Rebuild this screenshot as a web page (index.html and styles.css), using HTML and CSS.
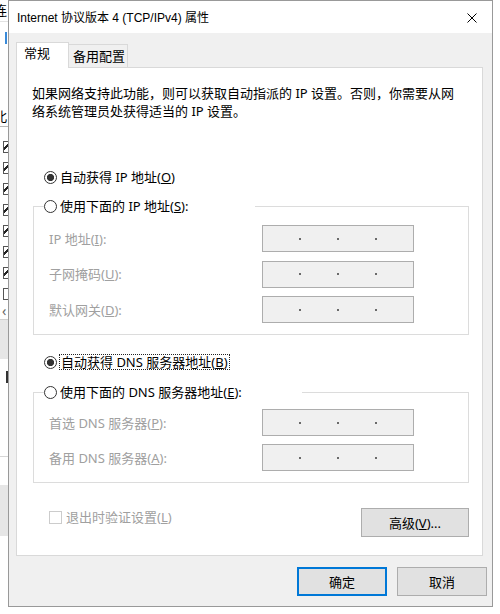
FILE: index.html
```html
<!DOCTYPE html>
<html lang="zh-CN">
<head>
<meta charset="utf-8">
<title>Internet 协议版本 4 (TCP/IPv4) 属性</title>
<link rel="stylesheet" href="styles.css">
</head>
<body>
<div class="desk">
  <div class="behind">
    <div class="bw-char bw-top"><span>连</span></div>
    <div class="bw-gap g10"></div>
    <div class="bw-blue"></div>
    <div class="bw-gap g62"></div>
    <div class="bw-char bw-bei"><span>北</span></div>
    <div class="bw-gap g9"></div>
    <div class="bw-chk on"></div>
    <div class="bw-chk on"></div>
    <div class="bw-chk on"></div>
    <div class="bw-chk on"></div>
    <div class="bw-chk on"></div>
    <div class="bw-chk on"></div>
    <div class="bw-chk on"></div>
    <div class="bw-chk"></div>
    <div class="bw-arrow">&lsaquo;</div>
    <div class="bw-gray g39"></div>
    <div class="bw-gap g12"></div>
    <div class="bw-mark"></div>
    <div class="bw-gap bw-line g74"></div>
    <div class="bw-gap g28"></div>
    <div class="bw-gray g51"></div>
    <div class="bw-rest"></div>
  </div>

  <div class="dialog">
    <div class="titlebar">
      <span class="title">Internet 协议版本 4 (TCP/IPv4) 属性</span>
      <svg class="close" width="10" height="10" viewBox="0 0 10 10"><path d="M0.5 0.5 L9.5 9.5 M9.5 0.5 L0.5 9.5" stroke="#000" stroke-width="1" fill="none"/></svg>
    </div>
    <div class="body">
      <div class="tabs">
        <div class="tab active">常规</div>
        <div class="tab other">备用配置</div>
      </div>
      <div class="panel">
        <p class="intro">如果网络支持此功能，则可以获取自动指派的 IP 设置。否则，你需要从网<br>络系统管理员处获得适当的 IP 设置。</p>

        <div class="radio-row r1"><span class="radio checked"></span><span class="rlabel">自动获得 IP 地址(<u>O</u>)</span></div>

        <fieldset class="group g-ip">
          <legend class="radio-row lg-ip"><span class="radio"></span><span class="rlabel">使用下面的 IP 地址(<u>S</u>):</span></legend>
          <div class="fields f-ip">
            <div class="field"><span class="flabel">IP 地址(<u>I</u>):</span><span class="ipbox"><i></i><i></i><i></i></span></div>
            <div class="field"><span class="flabel">子网掩码(<u>U</u>):</span><span class="ipbox"><i></i><i></i><i></i></span></div>
            <div class="field"><span class="flabel">默认网关(<u>D</u>):</span><span class="ipbox"><i></i><i></i><i></i></span></div>
          </div>
        </fieldset>

        <div class="radio-row r3"><span class="radio checked tight"></span><span class="rlabel focus">自动获得 DNS 服务器地址(<u>B</u>)</span></div>

        <fieldset class="group g-dns">
          <legend class="radio-row lg-dns"><span class="radio"></span><span class="rlabel">使用下面的 DNS 服务器地址(<u>E</u>):</span></legend>
          <div class="fields f-dns">
            <div class="field"><span class="flabel">首选 DNS 服务器(<u>P</u>):</span><span class="ipbox"><i></i><i></i><i></i></span></div>
            <div class="field"><span class="flabel">备用 DNS 服务器(<u>A</u>):</span><span class="ipbox"><i></i><i></i><i></i></span></div>
          </div>
        </fieldset>

        <div class="bottomrow">
          <div class="chk"><span class="box"></span><span class="clabel">退出时验证设置(<u>L</u>)</span></div>
          <div class="btn adv">高级(<u>V</u>)...</div>
        </div>
      </div>
      <div class="actions">
        <div class="btn ok">确定</div>
        <div class="btn cancel">取消</div>
      </div>
    </div>
  </div>
</div>
</body>
</html>
```
FILE: styles.css
```css
* { box-sizing: border-box; }
html, body { margin: 0; padding: 0; background: #fff; }
body {
  font-family: "Noto Sans", "Noto Sans CJK SC", sans-serif;
  font-size: 13px;
  color: #000;
}
u { text-decoration: underline; text-underline-offset: 1px; }

.desk { display: flex; width: 500px; height: 614px; overflow: hidden; }

/* window behind the dialog */
.behind { width: 8px; flex: none; display: flex; flex-direction: column; overflow: hidden; background: #fff; }
.bw-char { height: 21px; overflow: hidden; white-space: nowrap; line-height: 20px; font-size: 13px; }
.bw-char span { display: inline-block; margin-left: -6px; }
.bw-top { border-bottom: 1px solid #e2e2e2; height: 22px; }
.bw-bei { border-bottom: 1px solid #b8b8b8; }
.bw-gap { flex: none; }
.g9 { height: 9px; } .g10 { height: 10px; } .g12 { height: 12px; } .g28 { height: 28px; }
.g39 { height: 39px; } .g51 { height: 51px; } .g62 { height: 62px; } .g74 { height: 74px; }
.bw-blue { height: 12px; width: 2px; margin-left: 5px; background: #3a8ad8; flex: none; }
.bw-chk { height: 21px; flex: none; display: flex; align-items: center; }
.bw-chk::before { content: ""; width: 6px; height: 10px; margin-left: 3px; border: 1px solid #555; border-right: none; background: #fff; }
.bw-chk.on::before { background: linear-gradient(135deg, #fff 40%, #222 40%, #222 60%, #fff 60%); }
.bw-arrow { height: 16px; line-height: 14px; font-size: 14px; color: #666; padding-left: 2px; border-bottom: 1px solid #d0d0d0; flex: none; }
.bw-gray { background: #e6e6e6; flex: none; }
.bw-mark { height: 12px; width: 2px; margin-left: 6px; background: #333; flex: none; }
.bw-line { border-bottom: 1px solid #d6d6d6; }
.bw-rest { flex: 1; }

/* dialog */
.dialog {
  width: 485px; height: 607px; flex: none;
  border: 1px solid #999;
  display: flex; flex-direction: column;
  background: #f0f0f0;
}
.titlebar {
  height: 32px; flex: none; background: #fff;
  display: flex; align-items: center; justify-content: space-between;
  padding: 1px 15px 0 8px;
}
.title { font-family: "Liberation Sans", "Noto Sans CJK SC", sans-serif; font-size: 12px; line-height: 18px; }
.close { display: block; }

.body { flex: 1; display: flex; flex-direction: column; padding: 9px 5px 10px 7px; }

.tabs { display: flex; align-items: flex-start; height: 26px; margin-bottom: -1px; position: relative; z-index: 1; }
.tab { font-size: 13px; border: 1px solid #d9d9d9; border-bottom: none; }
.tab.active { width: 53px; height: 26px; background: #fff; padding-left: 7px; line-height: 20px; }
.tab.other { width: 59px; height: 23px; margin-top: 2px; border-left: none; background: #f0f0f0; padding-left: 4px; line-height: 22px; }

.panel {
  width: 467px; height: 489px; flex: none;
  background: #fff; border: 1px solid #d9d9d9;
  display: flex; flex-direction: column;
}
.intro { margin: 16px 0 0 15px; line-height: 18px; font-size: 13px; }

.radio-row { display: flex; align-items: center; height: 20px; }
.radio {
  width: 13px; height: 13px; flex: none;
  border: 1px solid #333; border-radius: 50%; background: #fff;
  margin-right: 3px;
}
.radio.checked { background: radial-gradient(circle, #333 0 3.3px, #fff 3.9px); }
.radio.tight { margin-right: 2px; }
.rlabel { line-height: 20px; white-space: nowrap; }
.r1 { margin: 47px 0 0 27px; }
.r3 { margin: 17px 0 0 27px; }
.focus { line-height: 14px; border: 1px dotted #222; padding: 0 1px; }

fieldset.group {
  margin: 9px 0 0 16px; width: 436px; min-width: 0;
  border: 1px solid #dcdcdc;
  padding: 0 0 11px 10px;
}
.g-dns { margin-top: 10px !important; }
legend.radio-row { padding: 0; margin: 0; }
.lg-ip { width: 211px; }
.lg-dns { width: 258px; }

.fields { display: flex; flex-direction: column; }
.f-ip { margin-top: 9px; gap: 8.5px; }
.f-dns { margin-top: 7px; gap: 8px; }
.field { display: grid; grid-template-columns: 213px 152px; align-items: center; height: 27px; margin-left: 5px; }
.flabel { color: #a0a0a0; line-height: 18px; white-space: nowrap; }
.ipbox {
  height: 27px; border: 1px solid #adadad; background: #f0f0f0;
  display: flex; justify-content: space-evenly; align-items: center;
}
.ipbox i { width: 2px; height: 2px; background: #6a6a6a; display: block; }

.bottomrow { display: flex; align-items: flex-start; margin-top: 25px; }
.chk { display: flex; align-items: center; gap: 4px; margin: 2px 0 0 32px; color: #a0a0a0; }
.chk .box { width: 13px; height: 13px; border: 1px solid #cccccc; background: #fff; }
.clabel { line-height: 14px; }

.btn {
  height: 29px; background: #e1e1e1; border: 1px solid #adadad;
  display: flex; align-items: center; justify-content: center;
  font-size: 13px; flex: none;
}
.adv { width: 108px; margin-left: auto; margin-right: 13px; }
.actions { display: flex; justify-content: flex-end; gap: 10px; margin-top: 11px; }
.ok { width: 90px; border: 2px solid #0078d7; }
.cancel { width: 90px; }
```
